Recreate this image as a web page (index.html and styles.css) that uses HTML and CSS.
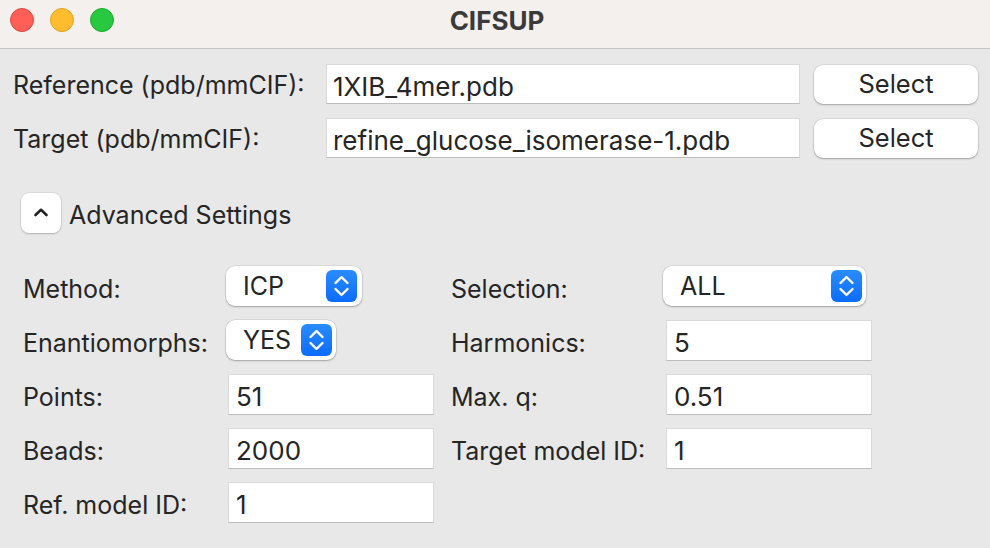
FILE: index.html
```html
<!DOCTYPE html>
<html>
<head>
<meta charset="utf-8">
<link rel="stylesheet" href="styles.css">
</head>
<body>
<div class="window">
  <header class="titlebar">
    <div class="lights">
      <span class="light red"></span>
      <span class="light yellow"></span>
      <span class="light green"></span>
    </div>
    <div class="title">CIFSUP</div>
  </header>
  <main class="content">
    <div class="file-row">
      <span class="file-label">Reference (pdb/mmCIF):</span>
      <div class="file-input">1XIB_4mer.pdb</div>
      <div class="btn">Select</div>
    </div>
    <div class="file-row">
      <span class="file-label">Target (pdb/mmCIF):</span>
      <div class="file-input">refine_glucose_isomerase-1.pdb</div>
      <div class="btn">Select</div>
    </div>
    <div class="advanced">
      <div class="disclosure">
        <svg width="16" height="10" viewBox="0 0 16 10"><path d="M2.5 8 L8 2.8 L13.5 8" fill="none" stroke="#222" stroke-width="2.6" stroke-linecap="round" stroke-linejoin="round"/></svg>
      </div>
      <span class="adv-label">Advanced Settings</span>
    </div>
    <div class="settings">
      <span class="lbl">Method:</span>
      <div class="cell"><div class="popup w-icp"><span>ICP</span><span class="stepper"><svg width="31" height="32" viewBox="0 0 31 32"><path d="M9.5 13 L15.5 7 L21.5 13 M9.5 19 L15.5 25 L21.5 19" fill="none" stroke="#fff" stroke-width="2.4" stroke-linecap="round" stroke-linejoin="round"/></svg></span></div></div>
      <span class="lbl">Selection:</span>
      <div class="cell"><div class="popup w-all"><span>ALL</span><span class="stepper"><svg width="31" height="32" viewBox="0 0 31 32"><path d="M9.5 13 L15.5 7 L21.5 13 M9.5 19 L15.5 25 L21.5 19" fill="none" stroke="#fff" stroke-width="2.4" stroke-linecap="round" stroke-linejoin="round"/></svg></span></div></div>

      <span class="lbl">Enantiomorphs:</span>
      <div class="cell"><div class="popup w-yes"><span>YES</span><span class="stepper"><svg width="31" height="32" viewBox="0 0 31 32"><path d="M9.5 13 L15.5 7 L21.5 13 M9.5 19 L15.5 25 L21.5 19" fill="none" stroke="#fff" stroke-width="2.4" stroke-linecap="round" stroke-linejoin="round"/></svg></span></div></div>
      <span class="lbl">Harmonics:</span>
      <div class="cell"><div class="field right">5</div></div>

      <span class="lbl">Points:</span>
      <div class="cell"><div class="field">51</div></div>
      <span class="lbl">Max. q:</span>
      <div class="cell"><div class="field right">0.51</div></div>

      <span class="lbl">Beads:</span>
      <div class="cell"><div class="field">2000</div></div>
      <span class="lbl">Target model ID:</span>
      <div class="cell"><div class="field right">1</div></div>

      <span class="lbl">Ref. model ID:</span>
      <div class="cell"><div class="field">1</div></div>
    </div>
  </main>
</div>
</body>
</html>
```
FILE: styles.css
```css
html, body {
  margin: 0;
  padding: 0;
}
body {
  width: 990px;
  height: 548px;
  overflow: hidden;
  background: #e8e8e8;
  font-family: "Inter", "Liberation Sans", sans-serif;
  color: #252525;
}
.window {
  width: 990px;
  height: 548px;
  display: flex;
  flex-direction: column;
}
.titlebar {
  height: 48px;
  flex: none;
  background: #f3f0ee;
  border-bottom: 1px solid #c6c6c6;
  display: flex;
  align-items: center;
  position: relative;
}
.lights {
  display: flex;
  gap: 16px;
  padding-left: 10px;
  margin-top: -8px;
}
.light {
  width: 22px;
  height: 22px;
  border-radius: 50%;
  border: 1px solid;
}
.red { background: #ff5f57; border-color: #e2463f; }
.yellow { background: #febc2e; border-color: #dea123; }
.green { background: #28c840; border-color: #1aab29; }
.title {
  position: absolute;
  left: 0;
  right: 0;
  top: 5px;
  text-align: center;
  font-weight: 700;
  font-size: 26px;
  color: #3a3a3a;
  padding-left: 4px;
}
.content {
  flex: 1;
  padding: 15px 0 0 13px;
  display: flex;
  flex-direction: column;
}
.file-row {
  display: flex;
  align-items: center;
  height: 40px;
  margin-bottom: 14px;
}
.file-label {
  width: 313px;
  font-size: 25px;
  padding-top: 2px;
}
.file-input {
  width: 474px;
  height: 40px;
  box-sizing: border-box;
  background: #fff;
  border: 1px solid #dadada;
  border-bottom-color: #bcbcbc;
  padding-left: 6px;
  display: flex;
  align-items: center;
  font-size: 26px;
  padding-top: 4px;
}
.btn {
  margin-left: 14px;
  width: 164px;
  height: 39px;
  box-sizing: border-box;
  background: #fff;
  border-radius: 9px;
  box-shadow: 0 0 0 0.5px rgba(0,0,0,0.12), 0 1px 2px rgba(0,0,0,0.25);
  display: flex;
  align-items: center;
  justify-content: center;
  font-size: 25.5px;
  color: #262626;
  padding-bottom: 2px;
}
.advanced {
  display: flex;
  align-items: center;
  margin-top: 21px;
  margin-left: 8px;
  height: 40px;
}
.disclosure {
  width: 40px;
  height: 40px;
  background: #fff;
  border-radius: 8px;
  box-shadow: 0 0 0 0.5px rgba(0,0,0,0.1), 0 1px 2px rgba(0,0,0,0.2);
  display: flex;
  align-items: center;
  justify-content: center;
}
.disclosure svg { margin-top: -2px; }
.adv-label {
  margin-left: 8px;
  font-size: 25px;
  padding-top: 4px;
}
.settings {
  margin-top: 33px;
  margin-left: 10px;
  display: grid;
  grid-template-columns: 203px 225px 212px 220px;
  grid-auto-rows: 40px;
  row-gap: 14px;
  align-items: center;
}
.lbl {
  font-size: 25px;
  padding-top: 6px;
}
.cell {
  display: flex;
  align-items: center;
  height: 40px;
}
.popup {
  height: 40px;
  box-sizing: border-box;
  background: #fff;
  border-radius: 9px;
  box-shadow: 0 0 0 0.5px rgba(0,0,0,0.12), 0 1px 2px rgba(0,0,0,0.25);
  display: flex;
  align-items: center;
  justify-content: space-between;
  padding: 0 4px 0 17px;
  font-size: 25px;
}
.w-icp { width: 136px; padding-right: 5px; }
.w-yes { width: 110px; }
.w-all { width: 203px; }
.stepper {
  width: 31px;
  height: 32px;
  border-radius: 6px;
  background: linear-gradient(#2b8cff, #0a6cfb);
  display: flex;
}
.field {
  width: 206px;
  height: 41px;
  box-sizing: border-box;
  margin-left: 2px;
  background: #fff;
  border: 1px solid #dadada;
  border-bottom-color: #bcbcbc;
  padding-left: 7px;
  padding-top: 5px;
  display: flex;
  align-items: center;
  font-size: 26px;
}
.field.right { margin-left: 3px; }
```
